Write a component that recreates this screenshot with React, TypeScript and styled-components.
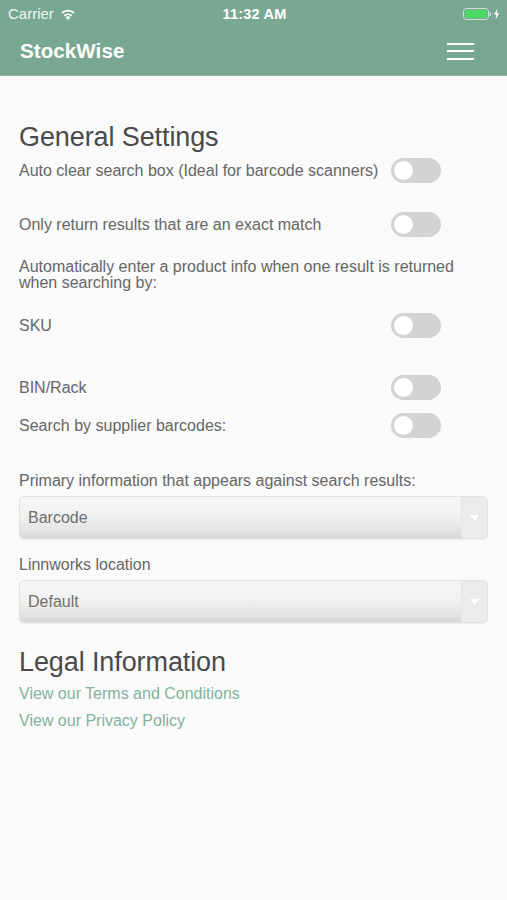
import React from 'react';
import styled, { createGlobalStyle } from 'styled-components';

const GlobalStyle = createGlobalStyle`
    body {
        margin: 0;
        background: #fafafa;
        font-family: 'Liberation Sans', Arial, sans-serif;
    }
`;

const Header = styled.header`
    background: #78a892;
    border-bottom: 1px solid #8fb8a5;
    color: #ffffff;
`;

const StatusBar = styled.div`
    height: 27px;
    display: grid;
    grid-template-columns: 1fr auto 1fr;
    align-items: center;
    padding: 0 6px 0 8px;
    font-size: 15px;
`;

const Carrier = styled.div`
    display: flex;
    align-items: center;
    gap: 6px;
    color: #f1f6f3;
`;

const Clock = styled.div`
    font-weight: 700;
    font-size: 14.5px;
    letter-spacing: 0.2px;
`;

const Power = styled.div`
    display: flex;
    justify-content: flex-end;
    align-items: center;
`;

const NavBar = styled.div`
    height: 48px;
    display: flex;
    align-items: center;
    justify-content: space-between;
    padding: 0 33px 0 20px;
`;

const Brand = styled.div`
    font-size: 20.5px;
    font-weight: 700;
    letter-spacing: 0.1px;
`;

const Burger = styled.button`
    width: 27px;
    height: 17px;
    padding: 0;
    border: 0;
    background: transparent;
    display: flex;
    flex-direction: column;
    justify-content: space-between;
    cursor: pointer;
`;

const BurgerLine = styled.span`
    display: block;
    height: 2px;
    background: #ffffff;
`;

const Content = styled.main`
    padding: 46px 19px 40px 19px;
    color: #666666;
`;

const Heading = styled.h2<{ $top?: number }>`
    margin: ${({ $top }) => $top ?? 0}px 0 0 0;
    font-size: 27px;
    line-height: 30px;
    font-weight: 400;
    color: #4a4a4a;
    letter-spacing: -0.1px;
`;

const Row = styled.div<{ $top: number }>`
    margin-top: ${({ $top }) => $top}px;
    display: grid;
    grid-template-columns: 1fr 50px;
    column-gap: 10px;
    align-items: center;
    padding-right: 47px;
    font-size: 16px;
    white-space: nowrap;
`;

const Note = styled.p<{ $top: number }>`
    margin: ${({ $top }) => $top}px 0 0 0;
    font-size: 16px;
    line-height: 16px;
`;

const Label = styled.div<{ $top: number }>`
    margin-top: ${({ $top }) => $top}px;
    font-size: 16px;
    line-height: 18px;
`;

const Toggle = styled.div`
    width: 50px;
    height: 25px;
    border-radius: 13px;
    background: #d3d3d3;
    position: relative;
`;

const Knob = styled.span`
    position: absolute;
    left: 3px;
    top: 3px;
    width: 19px;
    height: 19px;
    border-radius: 50%;
    background: #ffffff;
`;

const Select = styled.div`
    margin-top: 6px;
    height: 43px;
    display: flex;
    border-radius: 5px;
    border: 1px solid #e2e2e2;
    box-sizing: border-box;
    overflow: hidden;
    background: linear-gradient(#f6f6f6 0%, #f1f1f1 45%, #e4e4e4 80%, #d6d6d6 100%);
    box-shadow: 0 1px 1px rgba(0, 0, 0, 0.06);
`;

const SelectValue = styled.div`
    flex: 1;
    display: flex;
    align-items: center;
    padding-left: 8px;
    font-size: 16px;
    color: #6f6f6f;
`;

const SelectArrow = styled.div`
    width: 25px;
    display: flex;
    align-items: center;
    justify-content: center;
    background: #ebebeb;
    border-left: 1px solid #e6e6e6;
`;

const Link = styled.a<{ $top: number }>`
    display: block;
    margin-top: ${({ $top }) => $top}px;
    font-size: 16px;
    line-height: 18px;
    color: #82b29c;
    text-decoration: none;
`;

const Wifi = () => (
    <svg width="16" height="12" viewBox="0 0 16 12">
        <path d="M8 12 L5.6 9.2 A3.6 3.6 0 0 1 10.4 9.2 Z" fill="#fff" />
        <path d="M3.7 7.1 A6.4 6.4 0 0 1 12.3 7.1 L11.1 8.5 A4.6 4.6 0 0 0 4.9 8.5 Z" fill="#fff" />
        <path d="M1.3 4.3 A10 10 0 0 1 14.7 4.3 L13.5 5.7 A8.2 8.2 0 0 0 2.5 5.7 Z" fill="#fff" />
    </svg>
);

const Battery = () => (
    <svg width="38" height="14" viewBox="0 0 38 14">
        <rect x="0.5" y="1.5" width="25" height="11" rx="3" fill="none" stroke="#cfe3d8" strokeWidth="1" />
        <rect x="2" y="3" width="22" height="8" rx="1.5" fill="#4cd964" />
        <rect x="26.5" y="5" width="1.5" height="4" rx="0.7" fill="#cfe3d8" />
        <path d="M34.5 1.5 L31 7.6 L33.4 7.6 L32.6 12.5 L36.2 6.2 L33.8 6.2 Z" fill="#ffffff" />
    </svg>
);

const Caret = () => (
    <svg width="9" height="6" viewBox="0 0 9 6">
        <path d="M0 0 H9 L4.5 6 Z" fill="#ffffff" />
    </svg>
);

const Switch = () => (
    <Toggle>
        <Knob />
    </Toggle>
);

export default function App() {
    return (
        <>
            <GlobalStyle />
            <Header>
                <StatusBar>
                    <Carrier>
                        Carrier <Wifi />
                    </Carrier>
                    <Clock>11:32 AM</Clock>
                    <Power>
                        <Battery />
                    </Power>
                </StatusBar>
                <NavBar>
                    <Brand>StockWise</Brand>
                    <Burger aria-label="Menu">
                        <BurgerLine />
                        <BurgerLine />
                        <BurgerLine />
                    </Burger>
                </NavBar>
            </Header>
            <Content>
                <Heading>General Settings</Heading>
                <Row $top={6}>
                    <span>Auto clear search box (Ideal for barcode scanners)</span>
                    <Switch />
                </Row>
                <Row $top={29}>
                    <span>Only return results that are an exact match</span>
                    <Switch />
                </Row>
                <Note $top={22}>
                    Automatically enter a product info when one result is returned when searching by:
                </Note>
                <Row $top={22}>
                    <span>SKU</span>
                    <Switch />
                </Row>
                <Row $top={37}>
                    <span>BIN/Rack</span>
                    <Switch />
                </Row>
                <Row $top={13}>
                    <span>Search by supplier barcodes:</span>
                    <Switch />
                </Row>
                <Label $top={34}>Primary information that appears against search results:</Label>
                <Select>
                    <SelectValue>Barcode</SelectValue>
                    <SelectArrow>
                        <Caret />
                    </SelectArrow>
                </Select>
                <Label $top={17}>Linnworks location</Label>
                <Select>
                    <SelectValue>Default</SelectValue>
                    <SelectArrow>
                        <Caret />
                    </SelectArrow>
                </Select>
                <Heading $top={24}>Legal Information</Heading>
                <Link $top={8} href="#">
                    View our Terms and Conditions
                </Link>
                <Link $top={9} href="#">
                    View our Privacy Policy
                </Link>
            </Content>
        </>
    );
}
